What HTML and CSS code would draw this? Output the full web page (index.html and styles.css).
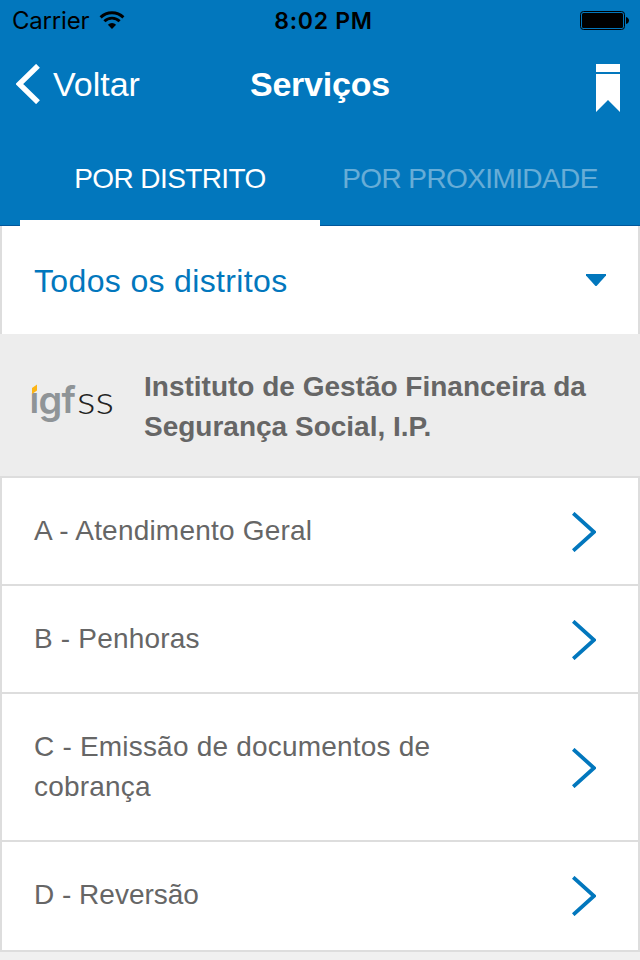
FILE: index.html
```html
<!DOCTYPE html>
<html lang="pt">
<head>
    <meta charset="UTF-8">
    <meta name="viewport" content="width=device-width, initial-scale=1.0">
    <title>Serviços</title>
    <link rel="stylesheet" href="styles.css">
</head>
<body>
    <header class="header">
        <div class="status-bar">
            <div class="carrier">
                <span class="carrier-name">Carrier</span>
                <svg class="wifi" width="26" height="20" viewBox="0 0 26 20">
                    <g fill="none" stroke="#000" stroke-width="2.9">
                        <path d="M1.6 7.4a16.2 16.2 0 0 1 22.8 0"/>
                        <path d="M5.4 11.3a10.8 10.8 0 0 1 15.2 0"/>
                    </g>
                    <path d="M8.9 14.8a5.8 5.8 0 0 1 8.2 0L13 18.9z"/>
                </svg>
            </div>
            <span class="time">8:02 PM</span>
            <svg class="battery" width="49" height="19" viewBox="0 0 49 19">
                <rect x="0.5" y="0.5" width="44" height="18" rx="3" fill="none" stroke="#000"/>
                <rect x="2" y="2" width="41" height="15" rx="1.5"/>
                <path d="M46 6c4 1 4 6 0 7z"/>
            </svg>
        </div>

        <nav class="navbar">
            <a class="back" href="#">
                <svg width="24" height="40" viewBox="0 0 24 40">
                    <path d="M22 1.8L3.3 20 22 38.2" fill="none" stroke="#fff" stroke-width="5.4"/>
                </svg>
                <span class="back-text">Voltar</span>
            </a>
            <h1>Serviços</h1>
            <a class="bookmark" href="#">
                <svg width="24" height="48" viewBox="0 0 24 48" fill="#fff">
                    <path d="M0 0h24v8H0z"/>
                    <path d="M0 10h24v38L12 36 0 48z"/>
                </svg>
            </a>
        </nav>

        <div class="tabs">
            <a class="tab active" href="#"><span>POR DISTRITO</span></a>
            <a class="tab" href="#"><span>POR PROXIMIDADE</span></a>
        </div>
    </header>

    <div class="district-select">
        <span>Todos os distritos</span>
        <svg width="20" height="12" viewBox="0 0 20 12">
            <path d="M0 0h20v1.5L11 11.4q-1 1-2 0L0 1.5z" fill="#0277bd"/>
        </svg>
    </div>

    <section class="entity">
        <svg class="logo" width="82" height="54" viewBox="0 0 82 54">
            <text class="logo-bold" y="35"><tspan x="-2.4">ı</tspan><tspan class="logo-g" x="6.6" dy="1">g</tspan><tspan x="29.5" dy="-1">f</tspan></text>
            <path d="M0 10l5-3.4v5.8L0 15.9z" fill="#fdb515"/>
            <text class="logo-thin" x="45" y="36" textLength="37" lengthAdjust="spacingAndGlyphs">ss</text>
        </svg>
        <h2>Instituto de Gestão Financeira da Segurança Social, I.P.</h2>
    </section>

    <ul class="services">
        <li>
            <span class="name">A - Atendimento Geral</span>
            <svg class="arrow" viewBox="0 0 24 40"><path d="M1.2 1.3L22 20 1.2 38.7"/></svg>
        </li>
        <li>
            <span class="name">B - Penhoras</span>
            <svg class="arrow" viewBox="0 0 24 40"><path d="M1.2 1.3L22 20 1.2 38.7"/></svg>
        </li>
        <li>
            <span class="name">C - Emissão de documentos de cobrança</span>
            <svg class="arrow" viewBox="0 0 24 40"><path d="M1.2 1.3L22 20 1.2 38.7"/></svg>
        </li>
        <li>
            <span class="name">D - Reversão</span>
            <svg class="arrow" viewBox="0 0 24 40"><path d="M1.2 1.3L22 20 1.2 38.7"/></svg>
        </li>
    </ul>
</body>
</html>
```
FILE: styles.css
```css
* { box-sizing: border-box; }
body {
    margin: 0; background: #f0f0f0; color: #666;
    font-family: "Liberation Sans", Arial, sans-serif; font-size: 28px;
}
a { color: inherit; text-decoration: none; }
svg { display: block; flex: none; }

.header { height: 226px; background: #0277bd; color: #fff; border-bottom: 1px solid #01579b; }
.status-bar {
    display: grid; grid-template-columns: 1fr auto 1fr; align-items: center;
    height: 40px; padding: 0 11px 0 12px;
    font-family: Inter, sans-serif; font-size: 24px; color: #000;
}
.carrier { display: flex; align-items: center; gap: 10px; }
.carrier-name { letter-spacing: -0.2px; }
.time { font-weight: 600; font-size: 23px; letter-spacing: 0.7px; padding: 2px 0 0 6px; }
.battery { justify-self: end; margin-top: 1px; }

.navbar {
    display: grid; grid-template-columns: 1fr auto 1fr; align-items: center;
    height: 88px; padding: 0 16px;
}
.back { display: flex; align-items: center; gap: 13px; }
.back-text { font-size: 34px; }
.navbar h1 { margin: 0; font-size: 34px; font-weight: bold; letter-spacing: -0.2px; }
.bookmark { justify-self: end; }
.bookmark svg { margin: 8px 4px 0 0; }

.tabs { display: flex; height: 98px; padding: 0 20px; }
.tab {
    flex: 1; padding-top: 35px; line-height: 32px; text-align: center;
    letter-spacing: -0.6px; border-bottom: 6px solid transparent;
}
.tab span { opacity: 0.4; }
.tab.active { border-bottom-color: #fff; }
.tab.active span { opacity: 1; }

.district-select {
    display: flex; align-items: center; justify-content: space-between;
    height: 108px; padding: 0 32px; background: #fff;
    border: solid #ddd; border-width: 0 2px;
    color: #0277bd; font-size: 32px; letter-spacing: 0.35px;
}
.district-select span { padding-top: 2px; }

.entity {
    display: flex; align-items: center; gap: 30px;
    height: 142px; padding: 0 32px; background: #ededed;
}
.entity h2 { margin: 0; padding-top: 4px; font-size: 28px; line-height: 40px; }
.logo { overflow: visible; }
.logo-bold { font: 600 37px Inter, sans-serif; fill: #8f9497; }
.logo-g { font-size: 38px; }
.logo-thin { font: 300 40px Lato, sans-serif; fill: #222; }

.services { list-style: none; margin: 0; padding: 0; border-bottom: 2px solid #ddd; }
.services li {
    display: flex; align-items: center; justify-content: space-between;
    padding: 33px 42px 33px 32px; background: #fff;
    border: solid #ddd; border-width: 2px 2px 0;
}
.services li:last-child { padding-bottom: 35px; }
.services li:last-child .name { letter-spacing: 0; }
.name { max-width: 440px; line-height: 40px; letter-spacing: 0.2px; }
.arrow { width: 24px; height: 40px; margin: -4px 0 -6px; fill: none; stroke: #0277bd; stroke-width: 3.8; }
```
